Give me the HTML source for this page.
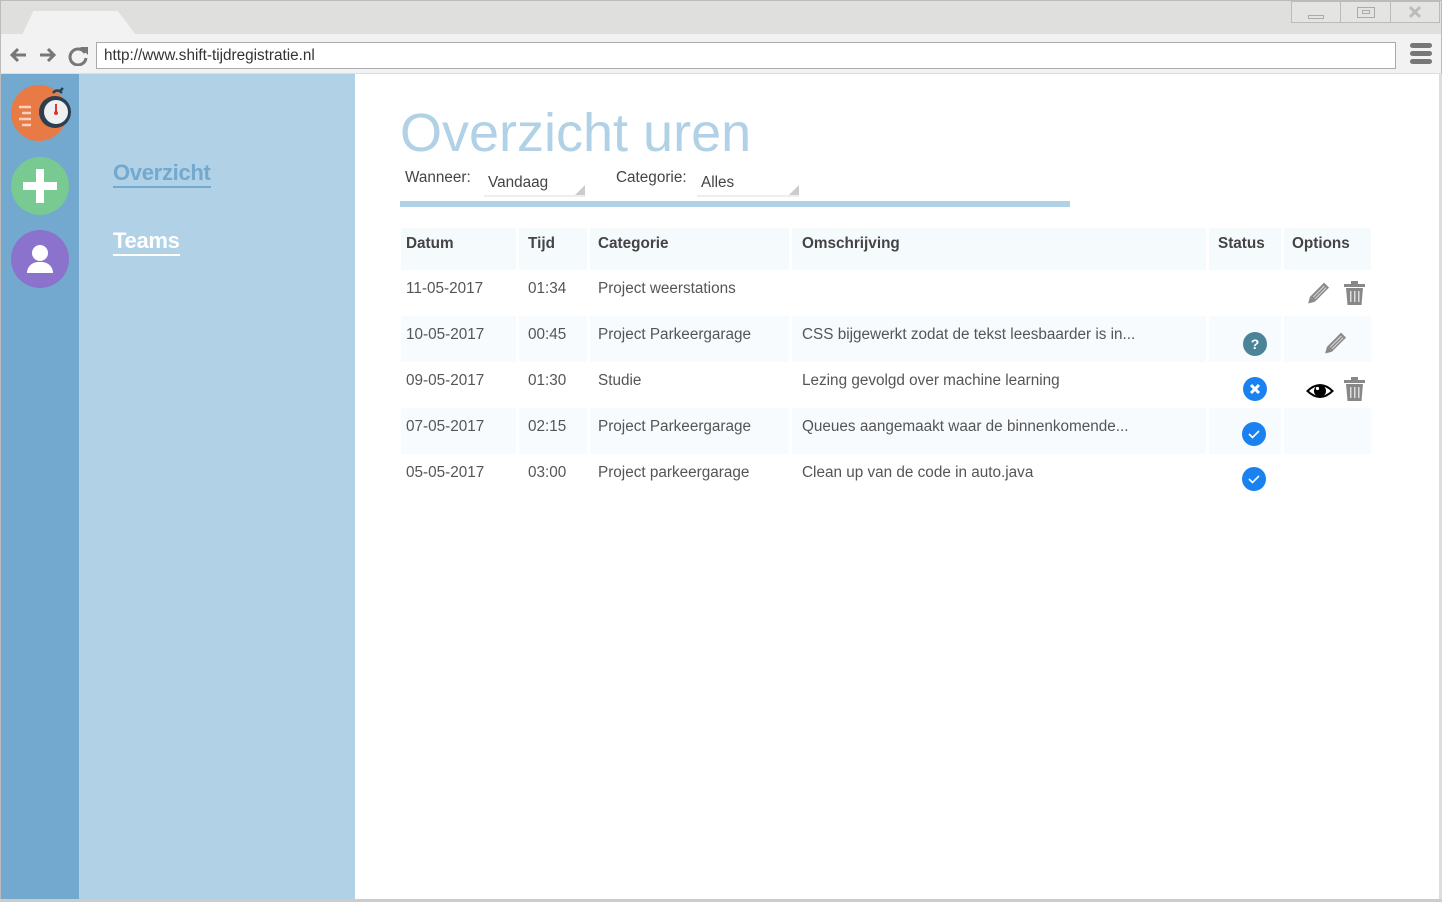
<!DOCTYPE html>
<html><head><meta charset="utf-8"><style>
*{margin:0;padding:0;box-sizing:border-box}
body{width:1442px;height:902px;position:relative;overflow:hidden;background:#fff;font-family:"Liberation Sans",sans-serif;color:#444}
.a{position:absolute}
.cell{position:absolute;font-size:15.3px;color:#555;padding:10px 5px 8px}
.sh{background:#f7fbfe}
.hd{background:#f5fafd;font-weight:bold;color:#444;padding-top:7px}
</style></head><body>
<div class="a" style="left:0;top:0;width:1442px;height:34px;background:#dfe0de;border:1px solid #bbb;border-bottom:none"></div>
<div class="a" style="left:22px;top:11px;width:114px;height:24px;background:#f2f2f2;clip-path:polygon(10% 0,84% 0,100% 100%,0 100%)"></div>
<div class="a" style="left:1291px;top:1px;width:149px;height:22px;border:1px solid #bbb;background:#e4e4e2"></div>
<div class="a" style="left:1340px;top:1px;width:1px;height:22px;background:#bbb"></div>
<div class="a" style="left:1390px;top:1px;width:1px;height:22px;background:#bbb"></div>
<div class="a" style="left:1308px;top:15px;width:16px;height:4px;border:1px solid #aaa"></div>
<div class="a" style="left:1357px;top:7px;width:18px;height:11px;border:1px solid #aaa"></div>
<div class="a" style="left:1362px;top:10px;width:8px;height:4px;border:1px solid #aaa"></div>
<svg class="a" style="left:1408px;top:5px" width="14" height="14"><path d="M2 2l10 10M12 2L2 12" stroke="#bbb" stroke-width="3"/></svg>
<div class="a" style="left:0;top:34px;width:1442px;height:40px;background:#f2f2f2;border-left:1px solid #bbb;border-right:1px solid #bbb;border-bottom:1px solid #ddd"></div>
<svg class="a" style="left:8px;top:44px" width="82" height="22"><g stroke="#777" stroke-width="3" fill="none"><path d="M4 11h14M10 5l-6 6 6 6"/><path d="M32 11h14M40 5l6 6-6 6"/><path d="M77 9a8 8 0 1 0 1 5"/></g><path d="M72 3l8 0 0 8z" fill="#777"/></svg>
<div class="a" style="left:96px;top:42px;width:1300px;height:27px;background:#fff;border:1px solid #aaa;font-size:15.3px;color:#333;padding:4px 7px">http://www.shift-tijdregistratie.nl</div>
<div class="a" style="left:1410px;top:43px;width:22px;height:5px;border-radius:3px;background:#777"></div>
<div class="a" style="left:1410px;top:51px;width:22px;height:5px;border-radius:3px;background:#777"></div>
<div class="a" style="left:1410px;top:59px;width:22px;height:5px;border-radius:3px;background:#777"></div>
<div class="a" style="left:0;top:74px;width:79px;height:828px;background:#73a9cf;border-left:1px solid #bbb"></div>
<div class="a" style="left:79px;top:74px;width:276px;height:828px;background:#b1d1e6"></div>
<div class="a" style="left:1439px;top:74px;width:3px;height:828px;background:#ddd"></div>
<div class="a" style="left:0;top:899px;width:1442px;height:3px;background:#ccc"></div>
<svg class="a" style="left:10px;top:84px" width="62" height="60"><circle cx="29" cy="29" r="28" fill="#e77a45"/><circle cx="45" cy="28" r="16" fill="#2d3e50"/><circle cx="46" cy="28" r="12" fill="#eef0f2"/><rect x="45" y="20" width="2" height="9" fill="#e03030"/><circle cx="46" cy="29" r="2" fill="#e03030"/><g stroke="#f6d2bd" stroke-width="2.5"><path d="M9 23h12M12 29h9M9 35h12M12 41h9"/></g><path d="M43 9q4-5 9 0M50 7l3-3" stroke="#2d3e50" stroke-width="2.5" fill="none"/></svg>
<div class="a" style="left:11px;top:157px;width:58px;height:58px;border-radius:50%;background:#78c992"></div>
<div class="a" style="left:23px;top:182px;width:34px;height:8px;background:#fff"></div>
<div class="a" style="left:36px;top:169px;width:8px;height:34px;background:#fff"></div>
<div class="a" style="left:11px;top:230px;width:58px;height:58px;border-radius:50%;background:#8b72cc"></div>
<div class="a" style="left:32px;top:245px;width:16px;height:16px;border-radius:50%;background:#fff"></div>
<div class="a" style="left:27px;top:262px;width:26px;height:11px;border-radius:13px 13px 0 0;background:#fff"></div>
<div class="a" style="left:113px;top:159px;font-size:22px;font-weight:bold;color:#73a9cf;border-bottom:2px solid #73a9cf;line-height:27px;letter-spacing:-0.3px">Overzicht</div>
<div class="a" style="left:113px;top:227px;font-size:22px;font-weight:bold;color:#fff;border-bottom:2px solid #fff;line-height:27px;letter-spacing:-0.3px">Teams</div>
<div class="a" style="left:400px;top:100px;font-size:54px;color:#b1d1e6;line-height:66px">Overzicht uren</div>
<div class="a" style="left:405px;top:169px;font-size:15.3px;color:#444">Wanneer:</div>
<div class="a" style="left:484px;top:174px;width:102px;height:23px;border-bottom:2px solid #eee;font-size:15.3px;padding-left:4px;color:#444">Vandaag</div>
<div class="a" style="left:575px;top:185px;width:10px;height:10px;background:#ccc;clip-path:polygon(100% 0,100% 100%,0 100%)"></div>
<div class="a" style="left:616px;top:169px;font-size:15.3px;color:#444">Categorie:</div>
<div class="a" style="left:697px;top:174px;width:102px;height:23px;border-bottom:2px solid #eee;font-size:15.3px;padding-left:4px;color:#444">Alles</div>
<div class="a" style="left:789px;top:185px;width:10px;height:10px;background:#ccc;clip-path:polygon(100% 0,100% 100%,0 100%)"></div>
<div class="a" style="left:400px;top:201px;width:670px;height:6px;background:#b1d1e6"></div>

<div class="cell hd" style="left:401px;top:228px;width:115px;height:42px">Datum</div>
<div class="cell hd" style="left:519px;top:228px;width:68px;height:42px;padding-left:9px">Tijd</div>
<div class="cell hd" style="left:590px;top:228px;width:199px;height:42px;padding-left:8px">Categorie</div>
<div class="cell hd" style="left:792px;top:228px;width:414px;height:42px;padding-left:10px">Omschrijving</div>
<div class="cell hd" style="left:1209px;top:228px;width:72px;height:42px;padding-left:9px">Status</div>
<div class="cell hd" style="left:1284px;top:228px;width:87px;height:42px;padding-left:8px">Options</div>

<div class="cell" style="left:401px;top:270px">11-05-2017</div>
<div class="cell" style="left:523px;top:270px">01:34</div>
<div class="cell" style="left:593px;top:270px">Project weerstations</div>

<div class="cell sh" style="left:401px;top:316px;width:115px;height:46px">10-05-2017</div>
<div class="cell sh" style="left:519px;top:316px;width:68px;height:46px;padding-left:9px">00:45</div>
<div class="cell sh" style="left:590px;top:316px;width:199px;height:46px;padding-left:8px">Project Parkeergarage</div>
<div class="cell sh" style="left:792px;top:316px;width:414px;height:46px;padding-left:10px">CSS bijgewerkt zodat de tekst leesbaarder is in...</div>
<div class="cell sh" style="left:1209px;top:316px;width:72px;height:46px"></div>
<div class="cell sh" style="left:1284px;top:316px;width:87px;height:46px"></div>

<div class="cell" style="left:401px;top:362px">09-05-2017</div>
<div class="cell" style="left:523px;top:362px">01:30</div>
<div class="cell" style="left:593px;top:362px">Studie</div>
<div class="cell" style="left:797px;top:362px">Lezing gevolgd over machine learning</div>

<div class="cell sh" style="left:401px;top:408px;width:115px;height:46px">07-05-2017</div>
<div class="cell sh" style="left:519px;top:408px;width:68px;height:46px;padding-left:9px">02:15</div>
<div class="cell sh" style="left:590px;top:408px;width:199px;height:46px;padding-left:8px">Project Parkeergarage</div>
<div class="cell sh" style="left:792px;top:408px;width:414px;height:46px;padding-left:10px">Queues aangemaakt waar de binnenkomende...</div>
<div class="cell sh" style="left:1209px;top:408px;width:72px;height:46px"></div>
<div class="cell sh" style="left:1284px;top:408px;width:87px;height:46px"></div>

<div class="cell" style="left:401px;top:454px">05-05-2017</div>
<div class="cell" style="left:523px;top:454px">03:00</div>
<div class="cell" style="left:593px;top:454px">Project parkeergarage</div>
<div class="cell" style="left:797px;top:454px">Clean up van de code in auto.java</div>

<svg class="a" style="left:1243px;top:332px" width="24" height="24"><circle cx="12" cy="12" r="12" fill="#4b8499"/><text x="12" y="17" font-size="14" font-weight="bold" fill="#fff" text-anchor="middle" font-family="Liberation Sans">?</text></svg>
<svg class="a" style="left:1243px;top:377px" width="24" height="24"><circle cx="12" cy="12" r="12" fill="#1a82f0"/><path d="M8 8l8 8M16 8l-8 8" stroke="#fff" stroke-width="3"/></svg>
<svg class="a" style="left:1242px;top:422px" width="24" height="24"><circle cx="12" cy="12" r="12" fill="#1a82f0"/><path d="M7 12l3.5 3.5L17 9" stroke="#fff" stroke-width="1.6" fill="none"/></svg>
<svg class="a" style="left:1242px;top:467px" width="24" height="24"><circle cx="12" cy="12" r="12" fill="#1a82f0"/><path d="M7 12l3.5 3.5L17 9" stroke="#fff" stroke-width="1.6" fill="none"/></svg>
<svg class="a" style="left:1304px;top:281px" width="26" height="26"><g transform="rotate(45 13 13)"><rect x="10" y="0" width="7" height="20" fill="#888"/><rect x="12" y="2" width="1" height="16" fill="#ddd"/><rect x="14.5" y="2" width="1" height="16" fill="#ddd"/><path d="M10 20h7l-3.5 6z" fill="#888"/></g></svg>
<svg class="a" style="left:1344px;top:281px" width="22" height="24"><rect x="0" y="3" width="21" height="3" fill="#888"/><rect x="7" y="0" width="7" height="4" fill="#888"/><path d="M2 7h17l-1.5 17h-14z" fill="#888"/><g fill="#ddd"><rect x="6" y="10" width="1.5" height="11"/><rect x="10" y="10" width="1.5" height="11"/><rect x="14" y="10" width="1.5" height="11"/></g></svg>
<svg class="a" style="left:1321px;top:331px" width="26" height="26"><g transform="rotate(45 13 13)"><rect x="10" y="0" width="7" height="20" fill="#888"/><rect x="12" y="2" width="1" height="16" fill="#ddd"/><rect x="14.5" y="2" width="1" height="16" fill="#ddd"/><path d="M10 20h7l-3.5 6z" fill="#888"/></g></svg>
<svg class="a" style="left:1305px;top:381px" width="30" height="20"><path d="M1 10Q15 -4 29 10Q15 24 1 10z" fill="#000"/><path d="M4 10Q15 0 26 10Q15 20 4 10z" fill="#fff"/><circle cx="15" cy="10" r="6" fill="#000"/><circle cx="12.5" cy="7.5" r="1.6" fill="#fff"/></svg>
<svg class="a" style="left:1344px;top:377px" width="22" height="24"><rect x="0" y="3" width="21" height="3" fill="#888"/><rect x="7" y="0" width="7" height="4" fill="#888"/><path d="M2 7h17l-1.5 17h-14z" fill="#888"/><g fill="#ddd"><rect x="6" y="10" width="1.5" height="11"/><rect x="10" y="10" width="1.5" height="11"/><rect x="14" y="10" width="1.5" height="11"/></g></svg>
</body></html>
